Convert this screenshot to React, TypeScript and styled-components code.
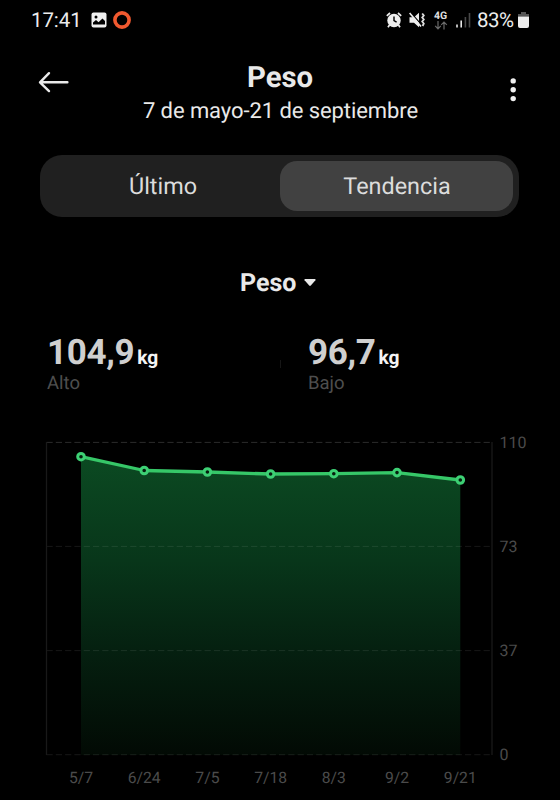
import React from "react";
import styled, { createGlobalStyle } from "styled-components";

const GlobalStyle = createGlobalStyle`
  * { box-sizing: border-box; }
  html, body { margin: 0; background: #000; }
  body {
    font-family: Roboto, "Liberation Sans", sans-serif;
    text-rendering: geometricPrecision;
    overflow: hidden;
  }
  button { text-rendering: inherit; }
`;

const Screen = styled.main`
  width: 560px;
  height: 800px;
  display: flex;
  flex-direction: column;
  background: #000;
  color: #e9e9e9;
  overflow: hidden;
`;

const StatusBar = styled.div`
  height: 40px;
  padding: 0 31px 0 31px;
  display: flex;
  align-items: center;
  justify-content: space-between;
`;

const StatusGroup = styled.div`
  display: flex;
  align-items: center;
`;

const StatusText = styled.span<{ $width: number; $spacing?: number }>`
  display: block;
  width: ${(p) => p.$width}px;
  padding-top: 1px;
  font-size: 20.5px;
  line-height: 40px;
  letter-spacing: ${(p) => p.$spacing ?? 0}px;
  white-space: nowrap;
  color: #ececec;
`;

const StatusIcon = styled.svg<{ $gap: number }>`
  display: block;
  flex: none;
  margin-left: ${(p) => p.$gap}px;
`;

const Network = styled.div`
  width: 15px;
  height: 20px;
  margin-left: 7.5px;
  display: flex;
  flex-direction: column;
  align-items: center;
`;

const NetworkLabel = styled.span`
  font-size: 10.5px;
  line-height: 11px;
  font-weight: 700;
  color: #dedede;
`;

const Header = styled.header`
  height: 114px;
  padding: 20px 38px 0;
  display: grid;
  grid-template-columns: 32px 1fr 32px;
`;

const IconButton = styled.button<{ $top: number; $align: string }>`
  height: 30px;
  margin-top: ${(p) => p.$top}px;
  padding: 0;
  border: 0;
  background: none;
  display: flex;
  justify-content: ${(p) => p.$align};
  svg { display: block; flex: none; }
`;

const Heading = styled.div`
  padding-top: 1px;
  text-align: center;
  white-space: nowrap;
`;

const Title = styled.h1`
  margin: 0;
  font-size: 29.3px;
  line-height: 34px;
  font-weight: 700;
`;

const Period = styled.p`
  margin: 0;
  font-size: 22px;
  line-height: 34px;
  letter-spacing: -0.08px;
  padding-left: 1px;
`;

const Tabs = styled.div`
  width: 479px;
  height: 62px;
  margin: 0.5px 0 0 40px;
  padding: 6px 6px 6px 5px;
  flex: none;
  display: grid;
  grid-template-columns: 235px 233px;
  grid-template-rows: 50px;
  border-radius: 22px;
  background: #202020;
`;

const Tab = styled.button<{ $active?: boolean }>`
  padding: 1px 0 0 1px;
  border: 0;
  border-radius: 17px;
  background: ${(p) => (p.$active ? "#414141" : "transparent")};
  color: #dcdcdc;
  font: 400 23.4px/49px Roboto, "Liberation Sans", sans-serif;
  text-align: center;
`;

const MetricPicker = styled.button`
  height: 34px;
  margin: 50.5px 0 0 240px;
  padding: 0;
  border: 0;
  background: none;
  color: #e9e9e9;
  display: flex;
  align-items: center;
  align-self: flex-start;
  gap: 8px;
  font: 700 25px/34px Roboto, "Liberation Sans", sans-serif;
  svg { margin-top: -2px; }
`;

const Summary = styled.section`
  height: 66px;
  margin: 31px 0 0 47px;
  display: grid;
  grid-template-columns: 232px 29px 1fr;
`;

const Value = styled.div`
  height: 41px;
  line-height: 41px;
  display: flex;
  align-items: baseline;
  font-size: 35px;
  font-weight: 700;
  letter-spacing: -0.35px;
  color: #cfcfcf;
`;

const Unit = styled.span`
  margin-left: 3px;
  font-size: 19.2px;
  letter-spacing: 0;
  color: #f4f4f4;
`;

const Caption = styled.div`
  font-size: 18.5px;
  line-height: 20px;
  color: #4e4e4e;
`;

const Divider = styled.div`
  width: 1px;
  height: 8px;
  margin: 28px 0 0 1px;
  background: #161616;
`;

const Chart = styled.svg`
  display: block;
  flex: none;
  margin-top: 18px;
  font-family: Roboto, "Liberation Sans", sans-serif;
`;

const points = [
  { label: "5/7", x: 81, y: 40.7 },
  { label: "6/24", x: 144.2, y: 54.5 },
  { label: "7/5", x: 207.4, y: 56 },
  { label: "7/18", x: 270.6, y: 58 },
  { label: "8/3", x: 333.8, y: 57.7 },
  { label: "9/2", x: 397, y: 56.6 },
  { label: "9/21", x: 460.3, y: 64 },
];

const gridLines = [
  { label: "110", y: 26.4, opacity: 0.17 },
  { label: "73", y: 130.4, opacity: 0.09 },
  { label: "37", y: 234.6, opacity: 0.09 },
  { label: "0", y: 338.7, opacity: 0.09 },
];

const line = points.map((p) => `${p.x},${p.y}`).join(" ");

function WeightChart() {
  return (
    <Chart width="560" height="384" viewBox="0 0 560 384">
      <defs>
        <linearGradient id="area" x1="0" y1="40" x2="0" y2="339" gradientUnits="userSpaceOnUse">
          <stop offset="0" stopColor="#0b4a22" />
          <stop offset="0.35" stopColor="#08361a" />
          <stop offset="0.65" stopColor="#052010" />
          <stop offset="1" stopColor="#020a04" />
        </linearGradient>
      </defs>
      <polygon points={`81,339 ${line} 460.3,339`} fill="url(#area)" />
      {gridLines.map((g) => (
        <g key={g.label}>
          <line x1="46.5" x2="492" y1={g.y} y2={g.y} stroke="#fff"
            strokeOpacity={g.opacity} strokeDasharray="6.2 3.1" />
          <text x="499.5" y={g.y + 5.2} fontSize="16" fill="#4b4b4b">{g.label}</text>
        </g>
      ))}
      <path d="M46.5 26V339M492 26V339" stroke="#191919" strokeWidth="1.3" />
      <polyline points={line} fill="none" stroke="#36c768" strokeWidth="3.3" strokeLinejoin="round" />
      {points.map((p) => (
        <g key={p.label}>
          <circle cx={p.x} cy={p.y} r="3.3" fill="#061d0e" stroke="#3dd074" strokeWidth="3" />
          <text x={p.x} y="366.5" textAnchor="middle" fontSize="15.7" fill="#4b4b4b">{p.label}</text>
        </g>
      ))}
    </Chart>
  );
}

export default function App() {
  return (
    <>
      <GlobalStyle />
      <Screen>
        <StatusBar>
          <StatusGroup>
            <StatusText $width={51} $spacing={-0.1}>17:41</StatusText>
            <StatusIcon $gap={8.5} width="16" height="16" viewBox="0 0 16 16">
              <rect x="0.5" y="0.5" width="15" height="15" rx="2" fill="#f0f0f0" />
              <circle cx="5" cy="5" r="1.5" fill="#000" />
              <path d="M2 12.5V10.5L5 8L7.5 10.3L11.5 6.5L14 9V12.5Z" fill="#000" />
            </StatusIcon>
            <StatusIcon $gap={6.5} width="18" height="18" viewBox="0 0 18 18">
              <circle cx="9" cy="9" r="7.1" fill="none" stroke="#f1592f" strokeWidth="3.6" />
            </StatusIcon>
          </StatusGroup>
          <StatusGroup>
            <StatusIcon $gap={0} width="16" height="16" viewBox="0 0 16 16">
              <circle cx="8" cy="8.5" r="6.7" fill="#eee" />
              <path d="M0.8 3.8L4 1M12 1L15.2 3.8M3.5 13L2 15.3M12.5 13L14 15.3" stroke="#eee" strokeWidth="1.7" />
              <path d="M8 4.5V8.7L10.6 10.2" fill="none" stroke="#000" strokeWidth="1.4" />
            </StatusIcon>
            <StatusIcon $gap={7} width="17" height="16" viewBox="0 0 17 16">
              <path d="M0.5 5.2H5L10 0.8V15.2L5 10.8H0.5Z" fill="#eee" />
              <path d="M1.6 0.4L13 13.4" stroke="#000" strokeWidth="1.3" />
              <path d="M0.6 1L12 14.5" stroke="#eee" strokeWidth="1.7" />
              <path d="M13.2 1.5L14.8 3.5L13.2 5.5L14.8 7.5L13.2 9.5L14.8 11.5L13.6 14" fill="none" stroke="#ddd" strokeWidth="1.8" />
            </StatusIcon>
            <Network>
              <NetworkLabel>4G</NetworkLabel>
              <svg width="14" height="9" viewBox="0 0 14 9">
                <path d="M4 0V7.5M1.2 4.8L4 7.8L6.8 4.8M10 8.5V1M7.2 3.8L10 1L12.8 3.8" fill="none" stroke="#6a6a6a" strokeWidth="1.2" />
              </svg>
            </Network>
            <StatusIcon $gap={7.5} width="15" height="16" viewBox="0 0 15 16">
              <path d="M1 12.5V15.5M5.2 8.5V15.5" stroke="#e8e8e8" strokeWidth="1.6" />
              <path d="M9.4 5V15.5M13.5 1V15.5" stroke="#494949" strokeWidth="1.6" />
            </StatusIcon>
            <StatusIcon as="span" $gap={6.5}>
              <StatusText $width={39} $spacing={-0.5}>83%</StatusText>
            </StatusIcon>
            <StatusIcon $gap={2} width="11" height="16" viewBox="0 0 11 16">
              <path d="M3 0H8V2H11V4.5H0V2H3Z" fill="#555" />
              <path d="M0 4.5H11V14Q11 16 9 16H2Q0 16 0 14Z" fill="#eee" />
            </StatusIcon>
          </StatusGroup>
        </StatusBar>

        <Header>
          <IconButton $top={10} $align="flex-start" aria-label="Atrás">
            <svg width="32" height="24" viewBox="0 0 32 24" fill="none" stroke="#e9e9e9" strokeWidth="2.4" strokeLinecap="round" strokeLinejoin="round">
              <path d="M29.4 12.3H2.2M11 3.2L2 12.3L11 21.1" />
            </svg>
          </IconButton>
          <Heading>
            <Title>Peso</Title>
            <Period>7 de mayo-21 de septiembre</Period>
          </Heading>
          <IconButton $top={17} $align="flex-end" aria-label="Más opciones">
            <svg width="18" height="28" viewBox="0 0 18 28" fill="#f0f0f0">
              <circle cx="9.2" cy="3.9" r="2.7" />
              <circle cx="9.2" cy="12.7" r="2.7" />
              <circle cx="9.2" cy="21.6" r="2.7" />
            </svg>
          </IconButton>
        </Header>

        <Tabs>
          <Tab>Último</Tab>
          <Tab $active>Tendencia</Tab>
        </Tabs>

        <MetricPicker>
          Peso
          <svg width="12" height="8" viewBox="0 0 12 8">
            <path d="M1 0H11Q12 .4 11.4 1.2L6.8 6.5Q6 7.3 5.2 6.5L.6 1.2Q0 .4 1 0Z" fill="#e9e9e9" />
          </svg>
        </MetricPicker>

        <Summary>
          <div>
            <Value>104,9<Unit>kg</Unit></Value>
            <Caption>Alto</Caption>
          </div>
          <Divider />
          <div>
            <Value>96,7<Unit>kg</Unit></Value>
            <Caption>Bajo</Caption>
          </div>
        </Summary>

        <WeightChart />
      </Screen>
    </>
  );
}
